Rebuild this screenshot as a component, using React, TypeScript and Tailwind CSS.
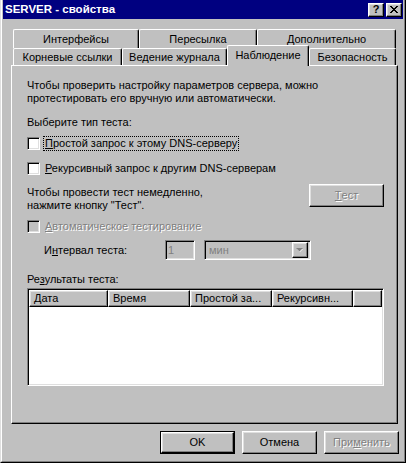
import React from 'react'

const raised =
  'border border-t-white border-l-white border-r-black border-b-black shadow-[inset_-1px_-1px_0_#808080,inset_1px_1px_0_#dfdfdf]'
const sunken =
  'border border-t-[#808080] border-l-[#808080] border-r-white border-b-white shadow-[inset_1px_1px_0_#000000,inset_-1px_-1px_0_#dfdfdf]'
const grayText = 'text-[#808080] [text-shadow:1px_1px_0_#ffffff]'

const Checkbox = ({ disabled }: { disabled?: boolean }) => (
  <span
    className={`block w-[13px] h-[13px] shrink-0 ${sunken} ${
      disabled ? 'bg-[#c0c0c0]' : 'bg-white'
    }`}
  />
)

const Tab = ({
  className,
  children
}: {
  className: string
  children: React.ReactNode
}) => (
  <div
    className={`flex items-center justify-center bg-[#c0c0c0] border-t border-l border-r border-t-white border-l-white border-r-black rounded-t-[2px] shadow-[inset_-1px_0_0_#808080] ${className}`}>
    {children}
  </div>
)

const HeaderCell = ({
  className,
  children
}: {
  className: string
  children?: React.ReactNode
}) => (
  <div
    className={`h-full flex items-center pl-[4px] whitespace-nowrap overflow-hidden ${raised} ${className}`}>
    {children}
  </div>
)

export default function App() {
  return (
    <div className="w-[406px] h-[463px] bg-[#c0c0c0] text-black text-[11px] font-['Liberation_Sans',Arial,sans-serif] border-l border-r border-b border-l-[#dfdfdf] border-r-black border-b-black">
      <div className="h-full border-l border-r border-b border-l-white border-r-[#808080] border-b-[#808080] px-px pb-px flex flex-col">
        {/* title bar */}
        <div className="h-[19px] bg-[#000080] flex items-center justify-between pl-[2px] pr-[1px]">
          <span className="text-white font-bold text-[11.5px] leading-none">
            SERVER - свойства
          </span>
          <div className="flex gap-[2px]">
            <div
              className={`w-[16px] h-[14px] bg-[#c0c0c0] flex items-center justify-center font-bold text-[11px] leading-none ${raised}`}>
              ?
            </div>
            <div
              className={`w-[16px] h-[14px] bg-[#c0c0c0] flex items-center justify-center ${raised}`}>
              <svg width="8" height="7" viewBox="0 0 8 7">
                <path
                  d="M0 0h2v1h1v1h2V1h1V0h2v1H7v1H6v1H5v1h1v1h1v1h1v1H6V6H5V5H3v1H2v1H0V6h1V5h1V4h1V3H2V2H1V1H0z"
                  fill="#000"
                />
              </svg>
            </div>
          </div>
        </div>

        {/* tabs */}
        <div className="mt-[10px] ml-[10px] flex h-[19px]">
          <Tab className="w-[126px]">Интерфейсы</Tab>
          <Tab className="w-[118px]">Пересылка</Tab>
          <Tab className="w-[139px]">Дополнительно</Tab>
        </div>
        <div className="ml-[10px] flex h-[17px] items-start">
          <Tab className="w-[109px] h-[17px]">Корневые ссылки</Tab>
          <Tab className="w-[105px] h-[17px]">Ведение журнала</Tab>
          <Tab className="w-[82px] h-[21px] -mt-[3px] pb-[2px] relative z-10">
            Наблюдение
          </Tab>
          <Tab className="w-[87px] h-[17px]">Безопасность</Tab>
        </div>

        {/* panel */}
        <div className="ml-[8px] w-[387px] h-[359px] border border-t-white border-l-white border-r-black border-b-black shadow-[inset_-1px_-1px_0_#808080] pl-[15px] pr-[13px] pt-[13px] flex flex-col">
          <p className="leading-[13px]">
            Чтобы проверить настройку параметров сервера, можно
            <br />
            протестировать его вручную или автоматически.
          </p>
          <p className="mt-[11px] leading-[13px]">Выберите тип теста:</p>

          <div className="mt-[6px] h-[16px] flex items-center">
            <Checkbox />
            <span className="ml-[3px] px-px leading-[13px] border border-dotted border-black">
              <span className="underline">П</span>ростой запрос к этому DNS-серверу
            </span>
          </div>
          <div className="mt-[9px] h-[16px] flex items-center">
            <Checkbox />
            <span className="ml-[4px] px-px leading-[13px]">
              <span className="underline">Р</span>екурсивный запрос к другим DNS-серверам
            </span>
          </div>

          <div className="mt-[8px] flex justify-between items-start">
            <p className="mt-[2px] leading-[13px]">
              Чтобы провести тест немедленно,
              <br />
              нажмите кнопку "Тест".
            </p>
            <div
              className={`w-[75px] h-[23px] flex items-center justify-center ${raised} ${grayText}`}>
              <span className="underline">Т</span>ест
            </div>
          </div>

          <div className="mt-[6px] h-[16px] flex items-center">
            <Checkbox disabled />
            <span className={`ml-[4px] px-px leading-[13px] ${grayText}`}>
              <span className="underline">А</span>втоматическое тестирование
            </span>
          </div>

          <div className="mt-[6px] h-[20px] flex items-center">
            <span className="w-[138px] pl-[17px] shrink-0">
              И<span className="underline">н</span>тервал теста:
            </span>
            <div
              className={`w-[30px] h-[20px] bg-[#c0c0c0] flex items-center pl-[2px] text-[#808080] ${sunken}`}>
              1
            </div>
            <div
              className={`ml-[9px] w-[107px] h-[20px] bg-[#c0c0c0] flex items-center justify-between pl-[4px] pr-[2px] text-[#808080] ${sunken}`}>
              <span>мин</span>
              <div
                className={`w-[16px] h-[16px] bg-[#c0c0c0] flex items-center justify-center ${raised}`}>
                <svg width="8" height="5" viewBox="0 0 8 5">
                  <path d="M1 1h6L4 4z" fill="#ffffff" />
                  <path d="M0 0h7L3.5 3.5z" fill="#808080" />
                </svg>
              </div>
            </div>
          </div>

          <p className="mt-[13px] leading-[13px]">
            Ре<span className="underline">з</span>ультаты теста:
          </p>

          <div className={`mt-[2px] h-[98px] bg-white flex flex-col ${sunken} p-[1px]`}>
            <div className="h-[17px] flex bg-[#c0c0c0] shrink-0">
              <HeaderCell className="w-[79px]">Дата</HeaderCell>
              <HeaderCell className="w-[82px]">Время</HeaderCell>
              <HeaderCell className="w-[82px]">Простой за...</HeaderCell>
              <HeaderCell className="w-[81px]">Рекурсивн...</HeaderCell>
              <HeaderCell className="flex-1" />
            </div>
          </div>
        </div>

        {/* buttons */}
        <div className="mt-[7px] mr-[4px] flex justify-end gap-[7px] text-[11px]">
          <div className="w-[75px] h-[23px] border border-black">
            <div
              className={`w-full h-full flex items-center justify-center ${raised}`}>
              OK
            </div>
          </div>
          <div
            className={`w-[75px] h-[23px] flex items-center justify-center ${raised}`}>
            Отмена
          </div>
          <div
            className={`w-[75px] h-[23px] flex items-center justify-center ${raised} ${grayText}`}>
            При<span className="underline">м</span>енить
          </div>
        </div>
      </div>
    </div>
  )
}
